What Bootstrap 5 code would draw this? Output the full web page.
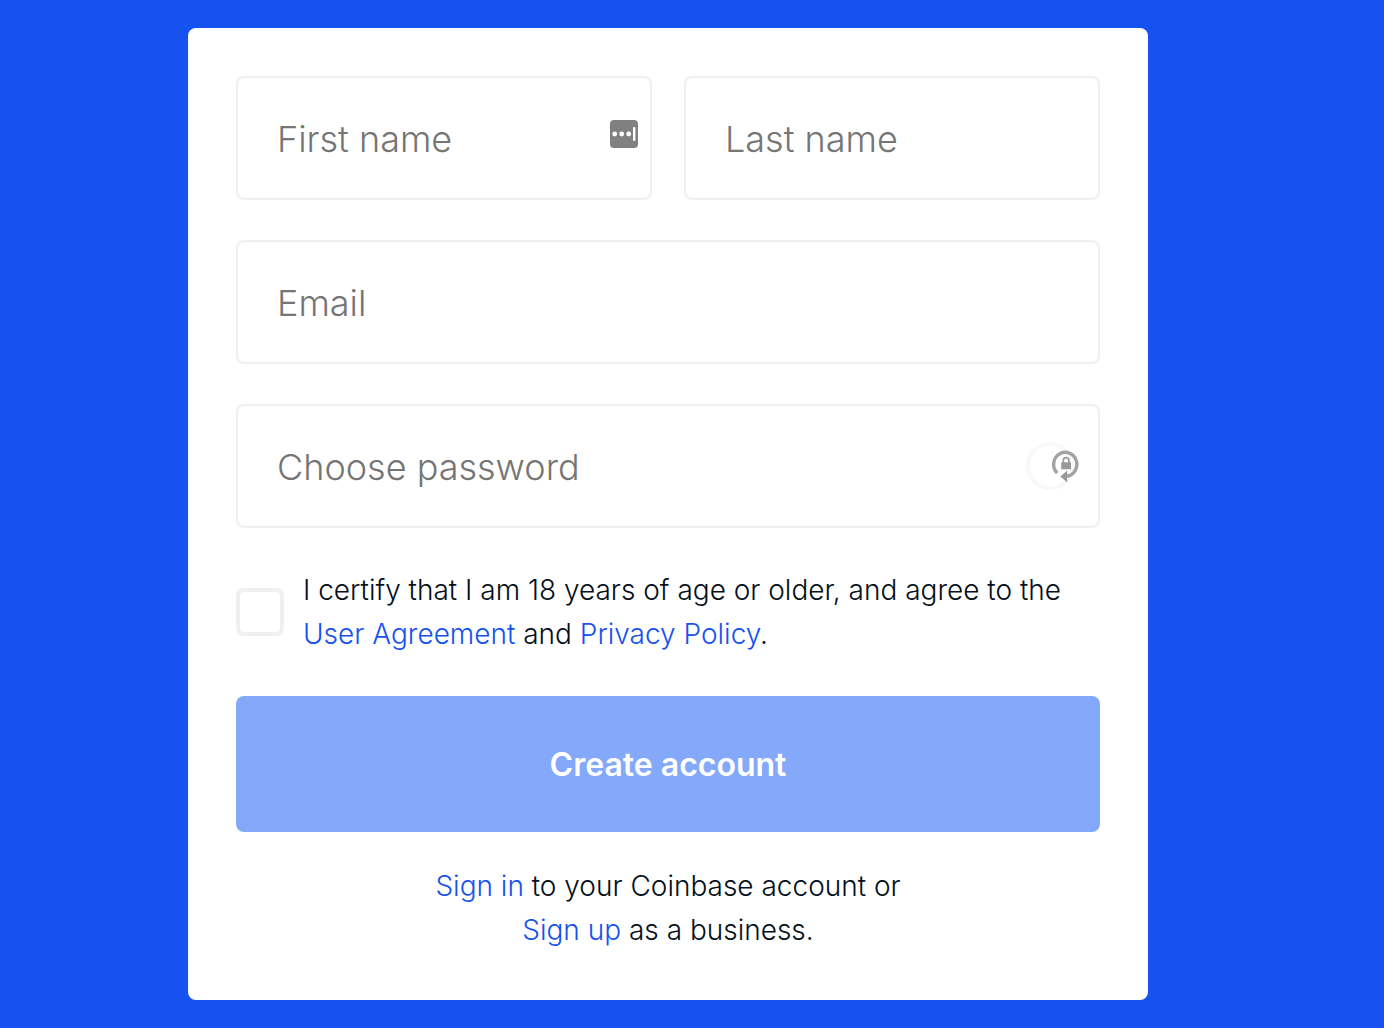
<!DOCTYPE html>
<html lang="en">
<head>
<meta charset="utf-8">
<meta name="viewport" content="width=device-width, initial-scale=1">
<title>Create account</title>
<link href="https://cdn.jsdelivr.net/npm/bootstrap@5.3.0/dist/css/bootstrap.min.css" rel="stylesheet">
<style>
  body { background: #1652f0; color: #050f19; font-family: Inter, "Liberation Sans", sans-serif; font-size: 28px; font-weight: 350; line-height: 44px; }
  a { color: #1652f0; text-decoration: none; }
  a:hover { text-decoration: underline; }
  .page { padding: 28px 48px 28px 0; }
  .signup { width: 100%; max-width: 960px; padding: 48px; border-radius: 8px; }
  .signup form { gap: 40px; }
  .name-row { --bs-gutter-x: 32px; --bs-gutter-y: 40px; }
  .field { height: 124px; padding: 2px 40px 0 39px; border: 2px solid #eeeff0; border-radius: 8px; font-size: 36px; font-weight: 350; line-height: 48px; color: #050f19; }
  .field::placeholder { color: #757575; opacity: 1; }
  .key-icon { position: absolute; right: 14px; top: 44px; }
  .lock-icon { position: absolute; right: 16px; top: 36px; }
  .agree { gap: 19px; }
  .agree .form-check-input { width: 48px; height: 48px; margin: 0; border: 4px solid #eeeff0; border-radius: 8px; }
  .create { height: 136px; padding: 2px 0 0; border: 0; border-radius: 8px; background: #84a9fa; color: #fff; font-size: 32px; font-weight: 600; }
  .create:hover { background: #6f9af8; color: #fff; }
  .other { margin-top: 32px; }
</style>
<script src="https://cdn.jsdelivr.net/npm/bootstrap@5.3.0/dist/js/bootstrap.bundle.min.js"></script>
</head>
<body>
<main class="page d-flex justify-content-center">
  <section class="signup bg-white">
    <form class="d-flex flex-column">
      <div class="name-row row">
        <div class="col-sm-6">
          <div class="position-relative">
            <input class="field form-control" id="first" type="text" placeholder="First name" aria-label="First name">
            <svg class="key-icon" width="28" height="28" viewBox="0 0 28 28" aria-hidden="true">
              <rect width="28" height="28" rx="4" fill="#808080"/>
              <g fill="#fff"><circle cx="4.7" cy="14" r="2.4"/><circle cx="11.7" cy="14" r="2.4"/><circle cx="18.7" cy="14" r="2.4"/><rect x="23" y="7" width="2.4" height="14" rx="1"/></g>
            </svg>
          </div>
        </div>
        <div class="col-sm-6">
          <input class="field form-control" id="last" type="text" placeholder="Last name" aria-label="Last name">
        </div>
      </div>
      <input class="field form-control" id="email" type="email" placeholder="Email" aria-label="Email">
      <div class="position-relative">
        <input class="field form-control" id="password" type="password" placeholder="Choose password" aria-label="Choose password">
        <svg class="lock-icon" width="60" height="52" viewBox="0 0 60 52" aria-hidden="true">
          <circle cx="26" cy="26" r="22.2" fill="none" stroke="#f7f8f9" stroke-width="3.6"/>
          <path d="M33.2 33A11.6 12 0 1 1 43 36.2" fill="none" stroke="#a3a3a3" stroke-width="3.4"/>
          <path d="M36.4 36.6L43.2 30.6V42.4Z" fill="#999"/>
          <rect x="37.2" y="22.2" width="9.8" height="7" rx="0.5" fill="#999"/>
          <path d="M39.3 23V20.4a2.8 2.8 0 0 1 5.6 0V23" fill="none" stroke="#999" stroke-width="1.7"/>
        </svg>
      </div>
      <div class="agree d-flex align-items-center">
        <input class="form-check-input flex-shrink-0" id="certify" type="checkbox">
        <label for="certify">I certify that I am 18 years of age or older, and agree to the <a href="#">User Agreement</a> and <a href="#">Privacy Policy</a>.</label>
      </div>
      <button class="create btn w-100" type="submit">Create account</button>
    </form>
    <p class="other mb-0 text-center"><a href="#">Sign in</a> to your Coinbase account or<br><a href="#">Sign up</a> as a business.</p>
  </section>
</main>
</body>
</html>
